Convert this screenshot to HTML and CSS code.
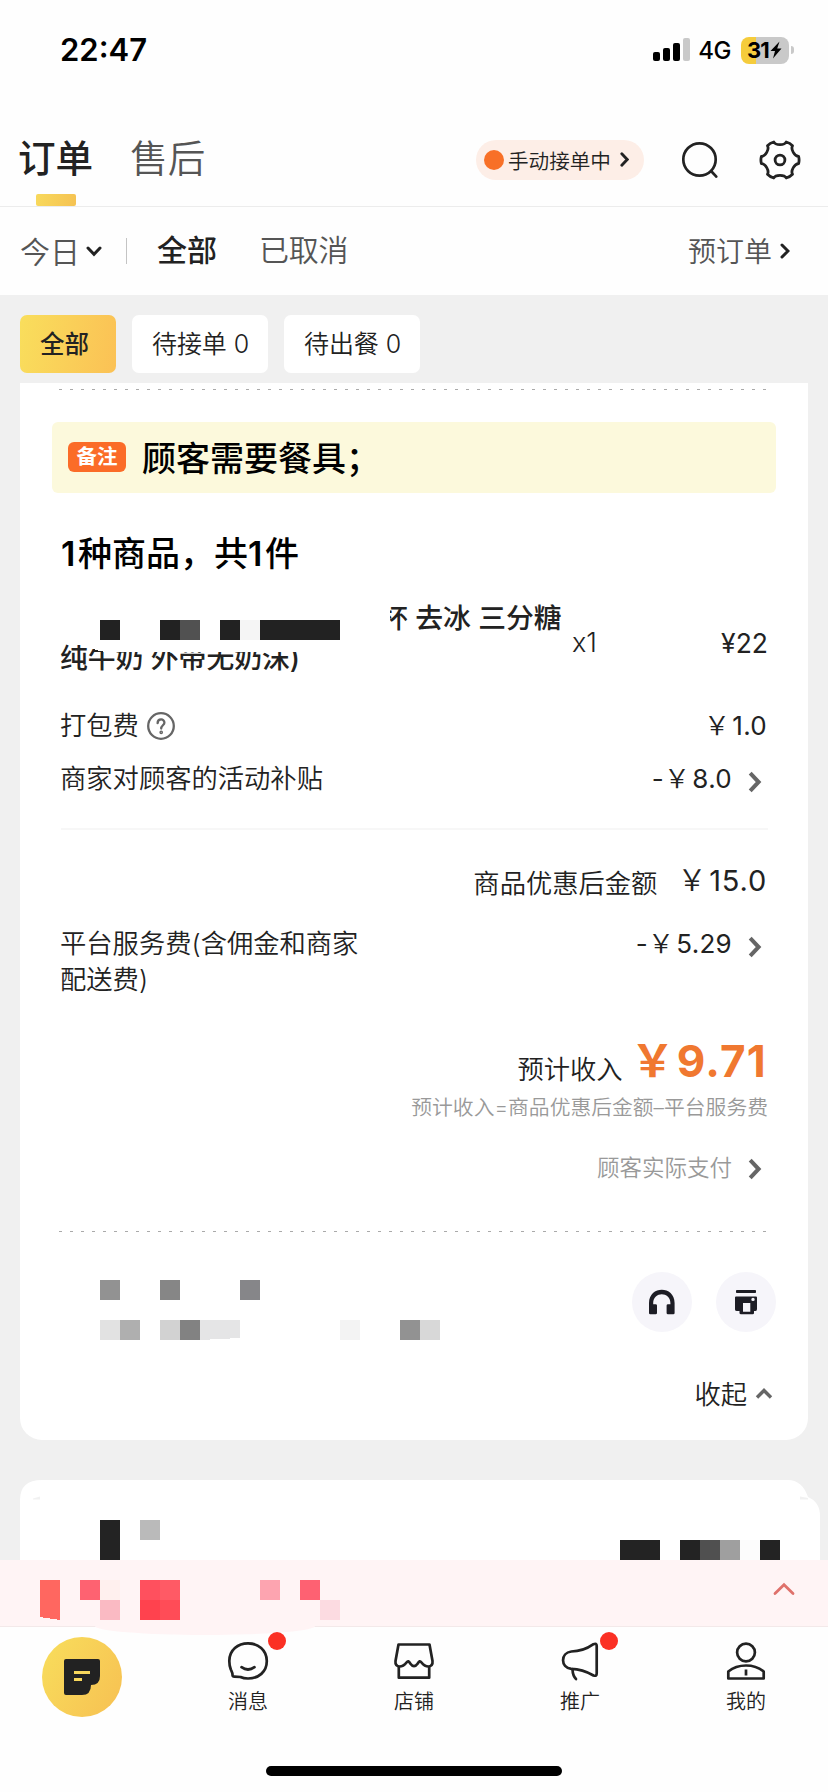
FILE: index.html
```html
<!DOCTYPE html>
<html lang="zh-CN">
<head>
<meta charset="utf-8">
<title>订单</title>
<link rel="stylesheet" href="styles.css">
</head>
<body>
<div class="app">
  <header class="status">
    <span class="time">22:47</span>
    <div class="status-right">
      <svg class="signal" width="37" height="24" viewBox="0 0 37 24"><rect x="0" y="14" width="7" height="9" rx="2"/><rect x="10" y="10" width="7" height="13" rx="2"/><rect x="20" y="5" width="7" height="18" rx="2"/><rect x="30" y="0" width="7" height="23" rx="2" fill="#c9c9c9"/></svg>
      <span class="net">4G</span>
      <div class="battery"><span>31</span><svg width="12" height="18" viewBox="0 0 12 18"><path d="M9.5 0.5 0.5 10H5L3 17.5 11.5 7.5H7.2Z"/></svg></div>
      <i class="nub"></i>
    </div>
  </header>

  <nav class="top">
    <div class="top-tab active">订单</div>
    <div class="top-tab">售后</div>
    <div class="mode"><i class="mode-dot"></i><span>手动接单中</span><svg width="9" height="15" viewBox="0 0 9 15"><path d="M1.8 1.8 7.2 7.5 1.8 13.2" fill="none" stroke="#222" stroke-width="2.8" stroke-linecap="round"/></svg></div>
    <svg class="search" width="38" height="38" viewBox="0 0 38 38" fill="none" stroke="#222" stroke-width="2.7" stroke-linecap="round"><circle cx="18.5" cy="18.5" r="16.2"/><path d="M30.3 30.3 35.3 35.6"/></svg>
    <svg class="gear" width="42" height="40" viewBox="0 0 42 40" fill="none" stroke="#222" stroke-width="2.8" stroke-linejoin="round"><circle cx="21" cy="20" r="4.9"/><path d="M14.800 2C16.500 5.500 25.500 5.500 27.200 2Q31 3 33.500 5.700C31.500 9.300 35.500 16.200 39.600 16.400Q40.600 20 39.600 23.600C35.500 23.800 31.500 30.700 33.500 34.300Q31 37 27.200 38C25.500 34.500 16.500 34.500 14.800 38Q11 37 8.500 34.300C10.500 30.700 6.500 23.800 2.400 23.600Q1.400 20 2.400 16.400C6.500 16.200 10.500 9.300 8.500 5.700Q11 3 14.800 2Z"/></svg>
  </nav>

  <div class="filters">
    <span class="muted today">今日</span>
    <svg class="down" width="16" height="11" viewBox="0 0 16 11"><path d="M2 2 8 8.300 14 2" fill="none" stroke="#222" stroke-width="3" stroke-linecap="round"/></svg>
    <i class="sep"></i>
    <span class="strong">全部</span>
    <span class="muted cancelled">已取消</span>
    <span class="muted pre">预订单</span>
    <svg width="10" height="16" viewBox="0 0 10 16"><path d="M2 2 8 8 2 14" fill="none" stroke="#222" stroke-width="3" stroke-linecap="round"/></svg>
  </div>

  <main class="body">
    <div class="chips">
      <div class="chip on">全部</div>
      <div class="chip">待接单 0</div>
      <div class="chip">待出餐 0</div>
    </div>

    <section class="card">
      <div class="dash first"></div>
      <div class="remark"><b>备注</b><span>顾客需要餐具；</span></div>
      <h2><b>1</b>种商品，共<b>1</b>件</h2>
      <div class="product">
        <div class="name">
          <div class="n1">杯 去冰 三分糖</div>
          <div>纯牛奶 外带无奶沫)</div>
          <svg class="cover" width="360" height="64" viewBox="0 0 360 64" shape-rendering="crispEdges"><path fill="#fff" d="M0 0H329V54H50Q36 54 25 48L10 46H0Z"/><g fill="#222"><rect x="39" y="22" width="20" height="20"/><rect x="99" y="22" width="20" height="20"/><rect x="119" y="22" width="20" height="20" fill="#515151"/><rect x="159" y="22" width="20" height="20"/><rect x="179" y="22" width="20" height="20" fill="#f5f5f5"/><rect x="199" y="22" width="80" height="20"/></g></svg>
        </div>
        <span class="qty">x1</span>
        <span class="amount">¥22</span>
      </div>
      <div class="line fee"><span>打包费</span><svg class="help" width="28" height="28" viewBox="0 0 28 28" fill="none" stroke="#666" stroke-width="2.300"><circle cx="14" cy="14" r="12.800"/><path d="M10.600 11.200C10.600 6.200 17.600 6.400 17.400 10.700 17.300 13.300 14.200 13.400 14.200 16.600" stroke-linecap="round"/><circle cx="14.200" cy="20.300" r=".7"/></svg><span class="val end"><i>￥</i>1.0</span></div>
      <div class="line subsidy"><span>商家对顾客的活动补贴</span><span class="val">-<i>￥</i>8.0</span><svg class="go" width="14" height="22" viewBox="0 0 14 22"><path d="M2.200 2.200 10.600 11 2.200 19.800"/></svg></div>
      <div class="divider"></div>
      <div class="line total"><span class="push">商品优惠后金额</span><span class="val big"><i>￥</i>15.0</span></div>
      <div class="line platform"><span>平台服务费(含佣金和商家配送费)</span><span class="val">-<i>￥</i>5.29</span><svg class="go" width="14" height="22" viewBox="0 0 14 22"><path d="M2.200 2.200 10.600 11 2.200 19.800"/></svg></div>
      <div class="income"><span>预计收入</span><strong><i>￥</i>9.71</strong></div>
      <div class="formula">预计收入=商品优惠后金额–平台服务费</div>
      <div class="line pay"><span class="push">顾客实际支付</span><svg class="go" width="14" height="22" viewBox="0 0 14 22"><path d="M2.200 2.200 10.600 11 2.200 19.800"/></svg></div>
      <div class="dash second"></div>
      <div class="foot">
        <svg class="pix" width="340" height="60" viewBox="0 0 340 60" shape-rendering="crispEdges"><rect width="20" height="20" fill="#929292"/><rect x="60" width="20" height="20" fill="#868686"/><rect x="140" width="20" height="20" fill="#868689"/><rect y="40" width="20" height="20" fill="#e2e2e2"/><rect x="20" y="40" width="20" height="20" fill="#afafaf"/><rect x="60" y="40" width="20" height="20" fill="#d2d2d2"/><rect x="80" y="40" width="20" height="20" fill="#828282"/><path d="M100 40H140V58L100 60Z" fill="#e5e5e6"/><rect x="240" y="40" width="20" height="20" fill="#f3f3f3"/><rect x="300" y="40" width="20" height="20" fill="#929292"/><rect x="320" y="40" width="20" height="20" fill="#d8d8d8"/></svg>
        <div class="round"><svg width="28" height="26" viewBox="0 0 28 26"><path d="M1 24V14C1 -3.600 26.600 -3.600 26.600 14V24Q26.600 25.300 25.300 25.300H20Q18.600 25.300 18.600 24V16.500Q18.600 15.200 20 15.200H22.400V14C22.400 2.200 5.200 2.200 5.200 14V15.200H7.600Q9 15.200 9 16.500V24Q9 25.300 7.600 25.300H2.300Q1 25.300 1 24Z"/></svg></div>
        <div class="round"><svg width="24" height="26" viewBox="0 0 24 26"><rect x="2" y="1" width="20" height="3" rx=".8"/><path fill-rule="evenodd" d="M2 7.500H22Q23 7.500 23 8.500V20Q23 22 21.500 22H20V24Q20 25.300 18.700 25.300H7Q5.500 25.300 5.500 24V22H3Q1 22 1 20.500V8.500Q1 7.500 2 7.500ZM9 14V22.800H16.300V14ZM19 8.700A1.700 1.700 0 1 0 19 12.100 1.700 1.700 0 1 0 19 8.700Z"/></svg></div>
      </div>
      <div class="collapse"><span>收起</span><svg width="18" height="13" viewBox="0 0 18 13"><path d="M2 10.500 9 3.500 16 10.500" fill="none" stroke="#666" stroke-width="3.400"/></svg></div>
    </section>

    <section class="next">
      <svg width="828" height="80" viewBox="0 0 828 80"><path fill="#fff" d="M20 80V20Q20 0 42 0H788Q802 0 808 17Q820 22 820 36V80Z"/><path d="M33 18.500 40 16.500V19.500H33ZM800 16.500 808 18V19.500H800Z" fill="#f1f1f1"/><g fill="#232323" shape-rendering="crispEdges"><rect x="100" y="40" width="20" height="40"/><rect x="140" y="40" width="20" height="20" fill="#bababa"/><rect x="620" y="60" width="40" height="20"/><rect x="680" y="60" width="20" height="20"/><rect x="700" y="60" width="20" height="20" fill="#505050"/><rect x="720" y="60" width="20" height="20" fill="#9f9f9f"/><rect x="740" y="60" width="20" height="20" fill="#fcfcfc"/><rect x="760" y="60" width="20" height="20"/></g></svg>
    </section>
  </main>

  <div class="notice">
    <svg class="notice-pix" width="300" height="40" viewBox="0 0 300 40" shape-rendering="crispEdges"><path d="M0 0H20V40L0 37Z" fill="#ff6760"/><rect x="40" width="20" height="20" fill="#fe6271"/><rect x="60" width="20" height="20" fill="#fff0ee"/><rect x="60" y="20" width="20" height="20" fill="#fabac3"/><rect x="100" width="20" height="20" fill="#ff505e"/><rect x="120" width="20" height="20" fill="#ff5a65"/><rect x="100" y="20" width="20" height="20" fill="#ff424e"/><rect x="120" y="20" width="20" height="20" fill="#ff4c57"/><rect x="220" width="20" height="20" fill="#fda4b0"/><rect x="260" width="20" height="20" fill="#fe6172"/><rect x="280" y="20" width="20" height="20" fill="#fcdbe1"/></svg>
    <svg width="22" height="14" viewBox="0 0 22 14"><path d="M2 11.500 11 2.800 20 11.500" fill="none" stroke="#df716b" stroke-width="2.800" stroke-linecap="round"/></svg>
  </div>

  <footer class="tabs">
    <div class="tab"><div class="tab-on"><svg width="36" height="36" viewBox="0 0 36 36"><path d="M2 0H34Q36 0 36 2V17Q36 26 27 26 27 36 18 36H2Q0 36 0 34V2Q0 0 2 0Z" fill="#222"/><path d="M10 12H26V15H10ZM10 19H18V22H10Z" fill="#f8d75c"/></svg></div></div>
    <div class="tab">
      <svg width="42" height="42" viewBox="0 0 42 42"><path d="M3.800 29.500Q2.300 25.500 2.300 21C2.300 10 11 3.300 21 3.300S39.800 10 39.800 21 31.500 38.500 21 38.500Q16.500 38.500 13.500 37L7.500 36.700Q5.400 36.800 5.500 34.800C5.600 33 4.900 32 3.800 29.500Z"/><path d="M14.500 27.200Q21 31.800 27.500 27.200" stroke-linecap="round"/></svg>
      <span>消息</span><i class="badge"></i>
    </div>
    <div class="tab">
      <svg width="42" height="42" viewBox="0 0 42 42"><path d="M5.500 4.500H36.500L39.500 21Q40 26 35.500 26.500 31.500 26.500 28.500 22.500 26.500 19.800 24.800 23.500 21 28.800 17.200 23.500 15.500 19.800 13.500 22.500 10.500 26.500 6.500 26.500 2 26 2.500 21Z"/><path d="M5.800 27V37.700H36.200V27"/></svg>
      <span>店铺</span>
    </div>
    <div class="tab">
      <svg width="42" height="42" viewBox="0 0 42 42"><path d="M12.300 11.500C21 11.500 27 9.500 34.500 4.200Q37.700 2.800 37.700 6V33.500Q37.700 36.500 34.500 35.500C27 31 21 28.800 12.300 28.800 1.300 27.500 1.300 13 12.300 11.500Z"/><path d="M13.500 29Q13.700 36 17 39" stroke-linecap="round"/></svg>
      <span>推广</span><i class="badge"></i>
    </div>
    <div class="tab">
      <svg width="42" height="42" viewBox="0 0 42 42"><circle cx="21" cy="12.500" r="8.900"/><path d="M3.300 38.500V31.500C13 23.500 29 23.500 38.700 31.500V38.500Z"/><path d="M21 29.500V35.500"/></svg>
      <span>我的</span>
    </div>
  </footer>
  <div class="home"></div>
</div>
</body>
</html>
```
FILE: styles.css
```css
* { box-sizing: border-box; }
body { margin: 0; background: #fefefe; color: #222; font-family: Inter, "Noto Sans CJK SC", sans-serif; font-weight: 350; }
i { font-style: normal; }
svg { display: block; flex: none; }
.app { width: 828px; height: 1792px; overflow: hidden; display: flex; flex-direction: column; white-space: nowrap; }

.status { height: 100px; display: flex; justify-content: space-between; padding: 0 34px 0 60px; color: #000; }
.time { font-size: 31px; font-weight: 600; line-height: 100px; letter-spacing: 0; }
.status-right { display: flex; align-items: center; }
.net { font-size: 24px; font-weight: 500; margin: 1px 10px 0 8px; letter-spacing: -.5px; }
.battery { width: 48px; height: 27px; border-radius: 8px; background: linear-gradient(90deg, #f5cc3c 15px, #c9c9c9 15px); display: flex; align-items: center; padding-left: 6px; font-size: 22px; font-weight: 700; letter-spacing: -1px; }
.battery svg { margin-left: 1px; }
.nub { width: 3px; height: 8px; margin-left: 2px; border-radius: 0 4px 4px 0; background: #c9c9c9; }

.top { height: 107px; display: flex; align-items: center; padding: 0 27px 0 18px; border-bottom: 1px solid #ececec; }
.top-tab { font-size: 37.6px; line-height: 107px; height: 106px; margin-right: 37px; color: #555; padding-top: 5px; }
.top-tab.active { color: #222; font-weight: 500; position: relative; }
.top-tab.active::after { content: ""; position: absolute; left: 18px; bottom: 0; width: 40px; height: 12px; border-radius: 2px; background: linear-gradient(100deg, #f8d95c, #f5c252); }
.mode { margin: 13px 37px 0 auto; width: 168px; height: 40px; border-radius: 20px; background: #fdeee7; display: flex; align-items: center; padding-left: 8px; font-size: 20.600px; }
.mode-dot { width: 20px; height: 20px; border-radius: 50%; background: #f87027; margin-right: 4px; }
.mode svg { margin-left: 9px; }
.search { margin: 13px 40px 0 0; }
.gear { margin: 13px 0 0; }

.filters { height: 88px; display: flex; align-items: center; padding: 0 38px 0 20px; font-size: 30px; }
.muted { color: #555; }
.today { margin-top: -2px; }
.strong { font-weight: 500; margin: -6px 42px 0 30px; }
.cancelled { margin-top: -6px; letter-spacing: -.2px; }
.down { margin: 1px 24px 0 6px; }
.sep { width: 1px; height: 26px; background: #c4c4c4; }
.pre { margin: -2px 8px 0 auto; font-size: 28px; }

.body { height: 1265px; background: #f0f0f0; }
.chips { height: 88px; padding: 20px 0 0 20px; display: flex; gap: 16px; align-items: flex-start; }
.chip { height: 58px; line-height: 58px; padding: 0 20px; border-radius: 7px; background: #fff; font-size: 25px; width: 136px; letter-spacing: -.1px; }
.chip.on { width: 96px; background: linear-gradient(100deg, #f9de5c, #fbc155); font-weight: 500; font-size: 24.500px; }

.card { height: 1057px; margin: 0 20px; padding: 6px 40px 0 40px; background: #fff; border-radius: 0 0 22px 22px; display: flex; flex-direction: column; font-size: 26.300px; }
.dash { flex: none; height: 1px; margin: 0 1px 0 -1px; background: repeating-linear-gradient(90deg, #aaa 0 3px, transparent 3px 11px); }
.remark { flex: none; height: 71px; margin: 32px -8px 0 -8px; padding-left: 16px; background: #fcf9dc; border-radius: 6px; display: flex; align-items: center; color: #000; font-size: 34px; font-weight: 500; }
.remark span { margin-top: -2px; }
.remark b { width: 58px; height: 30px; line-height: 29px; border-radius: 6px; background: #fb6c28; color: #fff; font-size: 20.500px; font-weight: 700; text-align: center; margin: 0 16px 2px 0; }
h2 { flex: none; margin: 41px 0 0 1px; line-height: 40px; font-size: 34px; font-weight: 500; color: #000; }
h2 b { display: inline-block; width: 17px; font-weight: 600; }
.product { flex: none; height: 80px; margin-top: 24px; display: flex; }
.name { position: relative; width: 512px; line-height: 40px; font-size: 27.800px; font-weight: 500; }
.n1 { padding-left: 320px; }
.cover { position: absolute; left: 1px; top: 0; }
.qty, .amount { font-size: 27px; line-height: 90px; }
.amount { margin-left: auto; font-size: 26.500px; font-weight: 400; }
.line { flex: none; height: 40px; line-height: 40px; display: flex; align-items: center; padding-right: 6px; }
.val { margin-left: auto; font-size: 26px; font-weight: 400; letter-spacing: .3px; }
.val i { margin-right: 2px; font-weight: 350; }
.val.end { margin-right: -5px; }
.val.big { margin: -7px -5px 0 20px; font-size: 29px; letter-spacing: .8px; }
.go { margin: 5px 0 0 16px; fill: none; stroke: #666; stroke-width: 4px; }
.push { margin-left: auto; }
.fee { margin-top: 28px; }
.help { margin-left: 8px; }
.subsidy { margin-top: 13px; }
.divider { flex: none; height: 2px; margin: 29px 0 0 1px; background: #f7f7f7; }
.total { margin-top: 34px; }
.platform { height: 72px; line-height: 36px; margin-top: 22px; align-items: flex-start; }
.platform > span:first-child { width: 310px; white-space: normal; }
.platform .go { margin-top: 10px; }
.income { flex: none; height: 44px; line-height: 44px; margin-top: 41px; display: flex; justify-content: flex-end; }
.income span { padding-top: 9px; }
.income strong { color: #f07830; font-size: 44px; font-weight: 700; margin: 0 1px 0 8px; letter-spacing: 1.200px; }
.income i { margin-right: 1px; }
.formula { flex: none; margin-top: 10px; line-height: 30px; font-size: 20.800px; color: #999; text-align: right; }
.pay { margin-top: 25px; font-size: 22.500px; color: #999; }
.pay .go { margin-top: 1px; }
.second { margin-top: 43px; }
.foot { flex: none; display: flex; margin: 40px -8px 0 40px; height: 60px; }
.pix { margin: 8px auto 0 0; }
.round { width: 60px; height: 60px; border-radius: 50%; background: #f6f5fa; display: flex; align-items: center; justify-content: center; margin-left: 24px; fill: #1d1d25; }
.collapse { flex: none; height: 40px; line-height: 40px; margin: 43px -5px 0 0; display: flex; align-items: center; justify-content: flex-end; }
.collapse svg { margin: -4px 0 0 8px; }
.next { margin-top: 40px; }

.notice { position: relative; height: 67px; background: #fff4f5; border-bottom: 1px solid #f3e9e9; padding: 0 33px 0 40px; display: flex; align-items: center; justify-content: space-between; }
.notice::after { content: ""; position: absolute; left: 95px; bottom: -9px; width: 220px; height: 9px; border-radius: 0 0 50% 50% / 0 0 100% 100%; background: #fff4f5; }
.notice-pix { margin-top: 14px; }
.notice svg:last-of-type { margin-bottom: 8px; }

.tabs { height: 139px; display: flex; margin-left: -1px; }
.tab { position: relative; flex: none; width: 166px; display: flex; flex-direction: column; align-items: center; padding-top: 13px; font-size: 20px; }
.tab > svg { fill: none; stroke: #222; stroke-width: 2.700px; stroke-linejoin: round; }
.tab span { line-height: 28px; margin-top: 6px; }
.tab-on { width: 80px; height: 80px; margin-top: -3px; border-radius: 50%; background: linear-gradient(120deg, #f8de5c, #f7c052); display: flex; align-items: center; justify-content: center; }
.badge { position: absolute; left: 103px; top: 5px; width: 18px; height: 18px; border-radius: 50%; background: #fb3024; }
.home { width: 296px; height: 10px; border-radius: 5px; background: #000; align-self: center; }
```
